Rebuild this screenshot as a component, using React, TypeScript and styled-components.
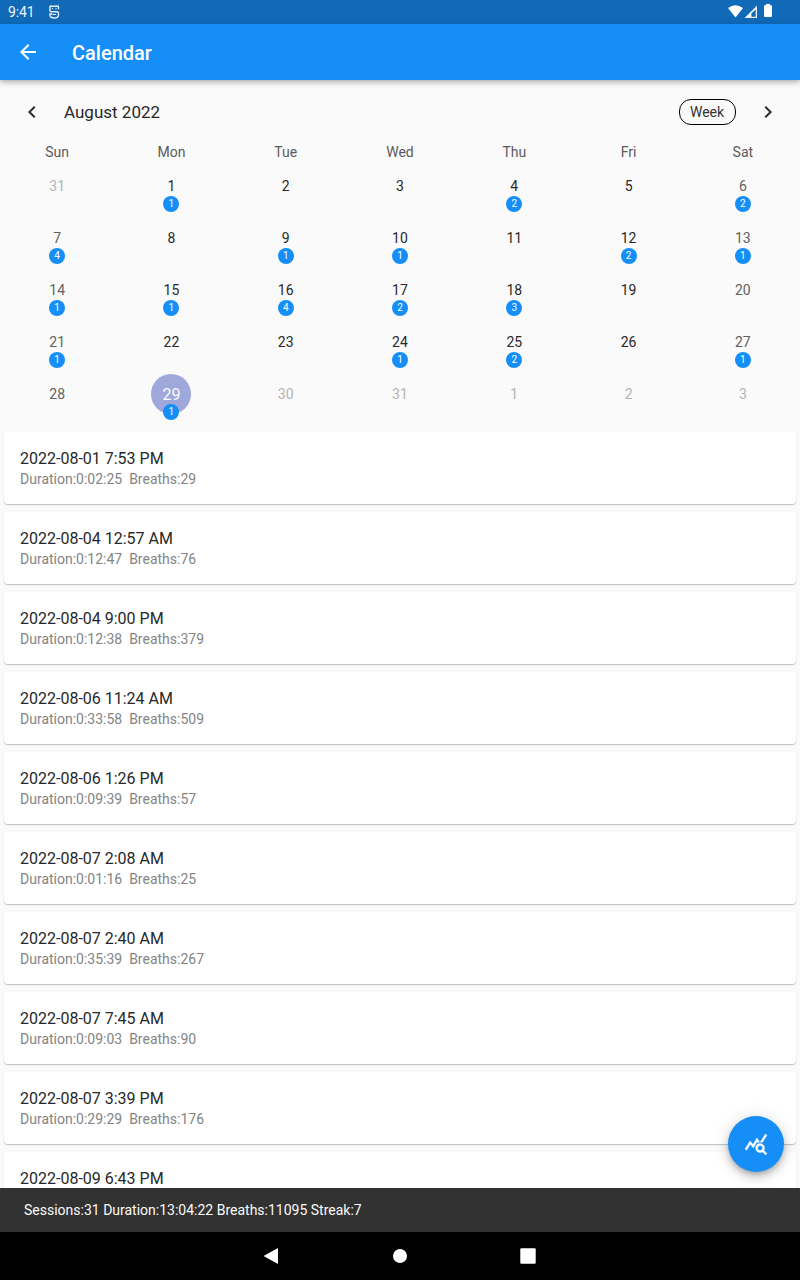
import React from 'react';
import styled, { createGlobalStyle } from 'styled-components';
import { MdArrowBack, MdChevronLeft, MdChevronRight, MdQueryStats } from 'react-icons/md';

const GlobalStyle = createGlobalStyle`
  * { box-sizing: border-box; }
  body { margin: 0; background: #fafafa; }
`;

const Screen = styled.div`
  position: relative;
  display: flex;
  flex-direction: column;
  width: 800px;
  height: 1280px;
  overflow: hidden;
  background: #fafafa;
  color: #282828;
  font-family: Roboto, sans-serif;
`;

const StatusBar = styled.div`
  display: flex;
  align-items: center;
  height: 24px;
  flex: none;
  padding: 0 24px 0 8px;
  background: #106ab8;
  color: #fff;
  font-size: 14px;
  line-height: 24px;
  svg { display: block; }
`;

const Clock = styled.span`
  width: 40px;
  letter-spacing: -0.1px;
  opacity: 0.92;
`;

const StatusIcons = styled.div`
  display: flex;
  margin-left: auto;
`;

const AppBar = styled.header`
  display: flex;
  align-items: center;
  height: 56px;
  flex: none;
  padding: 0 16px;
  gap: 32px;
  background: #168ef7;
  color: #fff;
  box-shadow: 0 2px 4px -1px rgba(0, 0, 0, 0.2), 0 4px 5px rgba(0, 0, 0, 0.1), 0 1px 10px rgba(0, 0, 0, 0.08);
  z-index: 1;
`;

const Title = styled.h1`
  margin: 0;
  padding-top: 2px;
  font-size: 20px;
  font-weight: 500;
  line-height: 24px;
`;

const MonthHeader = styled.div`
  display: flex;
  align-items: center;
  height: 64px;
  flex: none;
  padding: 0 20px;
  svg { display: block; }
`;

const MonthName = styled.div`
  flex: 1;
  padding-left: 20px;
  font-size: 17px;
  line-height: 20px;
`;

const FormatButton = styled.button`
  width: 57px;
  height: 26px;
  margin-right: 20px;
  padding: 0 1px 0 0;
  border: 1px solid #000;
  border-radius: 12px;
  background: none;
  color: #333;
  font: 14px/24px Roboto, sans-serif;
`;

const Week = styled.div<{ $height: number }>`
  display: grid;
  grid-template-columns: repeat(7, 1fr);
  height: ${(p) => p.$height}px;
  flex: none;
`;

const Weekday = styled.div`
  color: #5a5a5a;
  font-size: 14px;
  line-height: 16px;
  text-align: center;
`;

type Tone = 'normal' | 'weekend' | 'outside' | 'selected';
const toneColor: Record<Tone, string> = {
  normal: '#282828',
  weekend: '#626262',
  outside: '#b4b4b4',
  selected: '#fafaff',
};

const DayCell = styled.div`
  position: relative;
  display: flex;
  align-items: center;
  justify-content: center;
`;

const DayNumber = styled.div<{ $tone: Tone }>`
  width: 40px;
  height: 40px;
  border-radius: 50%;
  background: ${(p) => (p.$tone === 'selected' ? '#9fa8da' : 'transparent')};
  color: ${(p) => toneColor[p.$tone]};
  font-size: ${(p) => (p.$tone === 'selected' ? 16 : 14)}px;
  line-height: ${(p) => (p.$tone === 'selected' ? 41 : 40)}px;
  text-align: center;
`;

const Badge = styled.span`
  position: absolute;
  bottom: 0;
  left: 50%;
  width: 16px;
  height: 16px;
  margin-left: -8px;
  border-radius: 50%;
  background: #168ef7;
  color: #fff;
  font-size: 10px;
  line-height: 16px;
  text-align: center;
`;

const SessionList = styled.div`
  display: flex;
  flex-direction: column;
  flex: 1;
  min-height: 0;
  gap: 8px;
  margin-top: 8px;
  padding: 4px 4px 0;
  overflow: hidden;
`;

const SessionCard = styled.article`
  height: 72px;
  flex: none;
  padding: 16px 16px 0;
  border-radius: 4px;
  background: #fff;
  box-shadow: 0 1px 1px rgba(0, 0, 0, 0.2), 0 1px 2px rgba(0, 0, 0, 0.05);
`;

const SessionTime = styled.div`
  font-size: 16px;
  line-height: 21px;
`;

const SessionInfo = styled.div`
  color: #848484;
  font-size: 14px;
  line-height: 20px;
  white-space: pre;
`;

const Fab = styled.button`
  position: absolute;
  right: 16px;
  bottom: 108px;
  display: flex;
  align-items: center;
  justify-content: center;
  width: 56px;
  height: 56px;
  padding: 0;
  border: 0;
  border-radius: 50%;
  background: #168ef7;
  color: #fff;
  box-shadow: 0 3px 5px -1px rgba(0, 0, 0, 0.2), 0 6px 10px rgba(0, 0, 0, 0.14), 0 1px 18px rgba(0, 0, 0, 0.12);
  path[fill='none'] { stroke: none; }
  path:last-child { stroke-width: 0.4px; }
`;

const Summary = styled.footer`
  position: relative;
  height: 44px;
  flex: none;
  padding-left: 24px;
  background: #323232;
  color: #fafafa;
  font-size: 14px;
  line-height: 44px;
  z-index: 1;
`;

const NavBar = styled.nav`
  display: flex;
  align-items: center;
  justify-content: center;
  gap: 104px;
  height: 48px;
  flex: none;
  background: #000;
`;

type Day = [day: number, count?: number, tone?: Tone];

const weekdays = ['Sun', 'Mon', 'Tue', 'Wed', 'Thu', 'Fri', 'Sat'];
const weeks: Day[][] = [
  [[31, 0, 'outside'], [1, 1], [2], [3], [4, 2], [5], [6, 2]],
  [[7, 4], [8], [9, 1], [10, 1], [11], [12, 2], [13, 1]],
  [[14, 1], [15, 1], [16, 4], [17, 2], [18, 3], [19], [20]],
  [[21, 1], [22], [23], [24, 1], [25, 2], [26], [27, 1]],
  [[28], [29, 1, 'selected'], [30, 0, 'outside'], [31, 0, 'outside'], [1, 0, 'outside'], [2, 0, 'outside'], [3, 0, 'outside']],
];

const sessions = [
  ['2022-08-01 7:53 PM', '0:02:25', 29],
  ['2022-08-04 12:57 AM', '0:12:47', 76],
  ['2022-08-04 9:00 PM', '0:12:38', 379],
  ['2022-08-06 11:24 AM', '0:33:58', 509],
  ['2022-08-06 1:26 PM', '0:09:39', 57],
  ['2022-08-07 2:08 AM', '0:01:16', 25],
  ['2022-08-07 2:40 AM', '0:35:39', 267],
  ['2022-08-07 7:45 AM', '0:09:03', 90],
  ['2022-08-07 3:39 PM', '0:29:29', 176],
  ['2022-08-09 6:43 PM', '', 0],
] as const;

export default function App() {
  return (
    <Screen>
      <GlobalStyle />
      <StatusBar>
        <Clock>9:41</Clock>
        <svg width="12" height="16" viewBox="0 0 12 16" fill="none" stroke="#e3eef8" strokeWidth="1.4">
          <path d="M10.500 5.200V3.200Q10.500 2.200 9.500 2.200H3Q1.900 2.200 1.900 3.200V6.200Q1.900 7.700 3.400 7.700H9Q10.500 7.700 10.500 9.200V10.400Q10.500 14 6.200 14T1.900 10.400V10H4.200" />
          <path d="M4.300 4V5.300M8 4V5.300M2 1L3.200 2.200M10.400 1L9.200 2.200M4.500 10.500H8" strokeWidth="1" />
        </svg>
        <StatusIcons>
          <svg width="48" height="24" viewBox="0 0 48 24" fill="#fff">
            <path d="M0 8Q7.500 2.400 15 8L7.500 17.600Z" />
            <path d="M29 5.500V18H16.500ZM27.700 9.400L23.400 13.600V16.700H27.700Z" fillRule="evenodd" fillOpacity=".92" />
            <path d="M37.900 4h4.200v1.300H43a1 1 0 0 1 1 1V16a1 1 0 0 1-1 1H37a1 1 0 0 1-1-1V6.300a1 1 0 0 1 1-1h.9Z" />
          </svg>
        </StatusIcons>
      </StatusBar>
      <AppBar>
        <MdArrowBack size={24} />
        <Title>Calendar</Title>
      </AppBar>
      <MonthHeader>
        <MdChevronLeft size={24} />
        <MonthName>August 2022</MonthName>
        <FormatButton>Week</FormatButton>
        <MdChevronRight size={24} />
      </MonthHeader>
      <Week $height={16}>
        {weekdays.map((name) => (
          <Weekday key={name}>{name}</Weekday>
        ))}
      </Week>
      {weeks.map((week, row) => (
        <Week key={row} $height={52}>
          {week.map(([day, count, tone], col) => (
            <DayCell key={col}>
              <DayNumber $tone={tone ?? (col === 0 || col === 6 ? 'weekend' : 'normal')}>{day}</DayNumber>
              {count ? <Badge>{count}</Badge> : null}
            </DayCell>
          ))}
        </Week>
      ))}
      <SessionList>
        {sessions.map(([time, duration, breaths]) => (
          <SessionCard key={time}>
            <SessionTime>{time}</SessionTime>
            {duration && <SessionInfo>{`Duration:${duration}  Breaths:${breaths}`}</SessionInfo>}
          </SessionCard>
        ))}
      </SessionList>
      <Fab aria-label="Statistics">
        <MdQueryStats size={24} />
      </Fab>
      <Summary>Sessions:31 Duration:13:04:22 Breaths:11095 Streak:7</Summary>
      <NavBar>
        <svg width="24" height="24" viewBox="0 0 24 24" fill="#fff">
          <path d="M18 4V20L4.400 12.600Q3.600 12 4.400 11.400Z" />
        </svg>
        <svg width="24" height="24" viewBox="0 0 24 24" fill="#fff">
          <circle cx="12" cy="12" r="7" />
        </svg>
        <svg width="24" height="24" viewBox="0 0 24 24" fill="#fff">
          <rect x="4.300" y="4.300" width="15.400" height="15.400" rx="1" />
        </svg>
      </NavBar>
    </Screen>
  );
}
